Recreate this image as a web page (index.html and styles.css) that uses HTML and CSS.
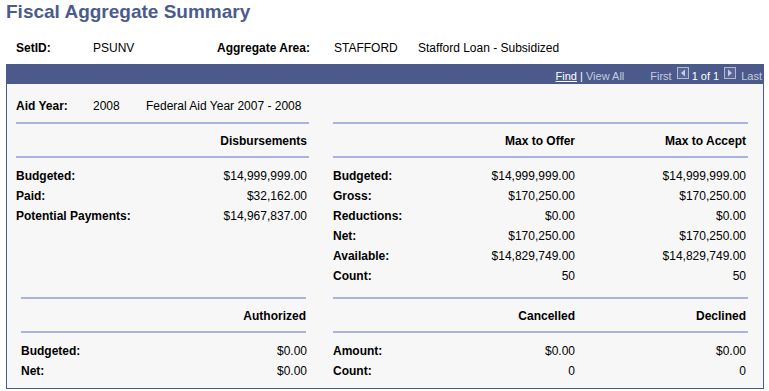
FILE: index.html
```html
<!DOCTYPE html>
<html lang="en">
<head>
    <meta charset="UTF-8">
    <title>Fiscal Aggregate Summary</title>
    <link rel="stylesheet" href="styles.css">
</head>
<body>

    <h1 class="page-title">Fiscal Aggregate Summary</h1>

    <!-- key fields -->
    <div class="key-row">
        <span class="lbl">SetID:</span>
        <span>PSUNV</span>
        <span class="lbl">Aggregate Area:</span>
        <span>STAFFORD</span>
        <span>Stafford Loan - Subsidized</span>
    </div>

    <div class="grid-box">
        <div class="nav-bar">
            <a class="nav-find">Find</a><span class="nav-sep">&nbsp;|&nbsp;</span><span class="nav-dim">View All</span>
            <span class="nav-dim nav-first">First</span>
            <svg class="nav-icon" width="12" height="12" viewBox="0 0 12 12"><rect x="0.5" y="0.5" width="11" height="11" fill="#56669a" stroke="#b3b9cf"/><path d="M8 2.5 L4 6 L8 9.5 Z" fill="#c9cddb"/></svg>
            <span class="nav-count">1 of 1</span>
            <svg class="nav-icon" width="12" height="12" viewBox="0 0 12 12"><rect x="0.5" y="0.5" width="11" height="11" fill="#56669a" stroke="#b3b9cf"/><path d="M4 2.5 L8 6 L4 9.5 Z" fill="#c9cddb"/></svg>
            <span class="nav-dim nav-last">Last</span>
        </div>

        <div class="grid-body">
            <div class="aid-row">
                <span class="lbl">Aid Year:</span>
                <span>2008</span>
                <span>Federal Aid Year 2007 - 2008</span>
            </div>

            <div class="section">
                <div class="panel">
                    <div class="panel-head">Disbursements</div>
                    <div class="panel-rows">
                        <div class="row"><span class="lbl">Budgeted:</span><span>$14,999,999.00</span></div>
                        <div class="row"><span class="lbl">Paid:</span><span>$32,162.00</span></div>
                        <div class="row"><span class="lbl">Potential Payments:</span><span>$14,967,837.00</span></div>
                    </div>
                </div>
                <div class="panel wide">
                    <div class="panel-head"><span></span><span>Max to Offer</span><span>Max to Accept</span></div>
                    <div class="panel-rows">
                        <div class="row"><span class="lbl">Budgeted:</span><span>$14,999,999.00</span><span>$14,999,999.00</span></div>
                        <div class="row"><span class="lbl">Gross:</span><span>$170,250.00</span><span>$170,250.00</span></div>
                        <div class="row"><span class="lbl">Reductions:</span><span>$0.00</span><span>$0.00</span></div>
                        <div class="row"><span class="lbl">Net:</span><span>$170,250.00</span><span>$170,250.00</span></div>
                        <div class="row"><span class="lbl">Available:</span><span>$14,829,749.00</span><span>$14,829,749.00</span></div>
                        <div class="row"><span class="lbl">Count:</span><span>50</span><span>50</span></div>
                    </div>
                </div>
            </div>

            <div class="section lower">
                <div class="panel inset">
                    <div class="panel-head">Authorized</div>
                    <div class="panel-rows">
                        <div class="row"><span class="lbl">Budgeted:</span><span>$0.00</span></div>
                        <div class="row"><span class="lbl">Net:</span><span>$0.00</span></div>
                    </div>
                </div>
                <div class="panel wide">
                    <div class="panel-head"><span></span><span>Cancelled</span><span>Declined</span></div>
                    <div class="panel-rows">
                        <div class="row"><span class="lbl">Amount:</span><span>$0.00</span><span>$0.00</span></div>
                        <div class="row"><span class="lbl">Count:</span><span>0</span><span>0</span></div>
                    </div>
                </div>
            </div>
        </div>
    </div>

</body>
</html>
```

FILE: styles.css
```css
html, body { margin: 0; padding: 0; background: #fff; }
body { padding: 0 5px 0 6px; font-family: "Liberation Sans", Arial, sans-serif; font-size: 12px; color: #000; }
.lbl { font-weight: bold; }

.page-title { margin: 0; font-size: 19px; line-height: 24px; font-weight: bold; color: #4b5b8e; }

.key-row { display: grid; grid-template-columns: 77px 124px 117px 84px auto; margin-top: 14px; padding-left: 10px; line-height: 20px; height: 20px; }

.grid-box { margin-top: 6px; border: 1px solid #4b5a8b; background: #f7f7f7; }

/* navigation bar */
.nav-bar { display: flex; justify-content: flex-end; align-items: flex-start; height: 16px; padding: 3px 1px 0 0; background: #4b5a8b; font-size: 11px; line-height: 16px; color: #fff; }
.nav-find { color: #fff; text-decoration: underline; }
.nav-sep { color: #fff; }
.nav-dim { color: #c6cbdc; }
.nav-first { margin-left: 26px; }
.nav-icon { display: block; margin: -1px 4px 0 5px; }
.nav-count { color: #fff; margin-left: -1px; }
.nav-last { margin-left: 1px; }

.grid-body { padding: 12px 15px 7px 9px; }

.aid-row { display: grid; grid-template-columns: 77px 53px auto; padding-left: 0; line-height: 20px; height: 20px; margin-bottom: 6px; }

/* sections */
.section { display: grid; grid-template-columns: 293px 415px; column-gap: 24px; align-items: start; }
.section.lower { margin-top: 11px; }

.panel-head { border-top: 2px solid #aab4dc; border-bottom: 2px solid #aab4dc; padding: 7px 2px 5px 0; line-height: 20px; height: 20px; font-weight: bold; text-align: right; }
.panel-rows { padding-top: 8px; }
.row { display: flex; justify-content: space-between; line-height: 20px; height: 20px; padding-right: 2px; }

.panel.wide .panel-head, .panel.wide .row { display: grid; grid-template-columns: 1fr 150px 171px; text-align: right; }
.panel.wide .row .lbl { text-align: left; }

.panel.inset { margin: 0 3px 0 5px; }
.panel.inset .panel-head { padding-right: 0; }
.panel.inset .row { padding-right: 0; margin-right: -1px; }
```
